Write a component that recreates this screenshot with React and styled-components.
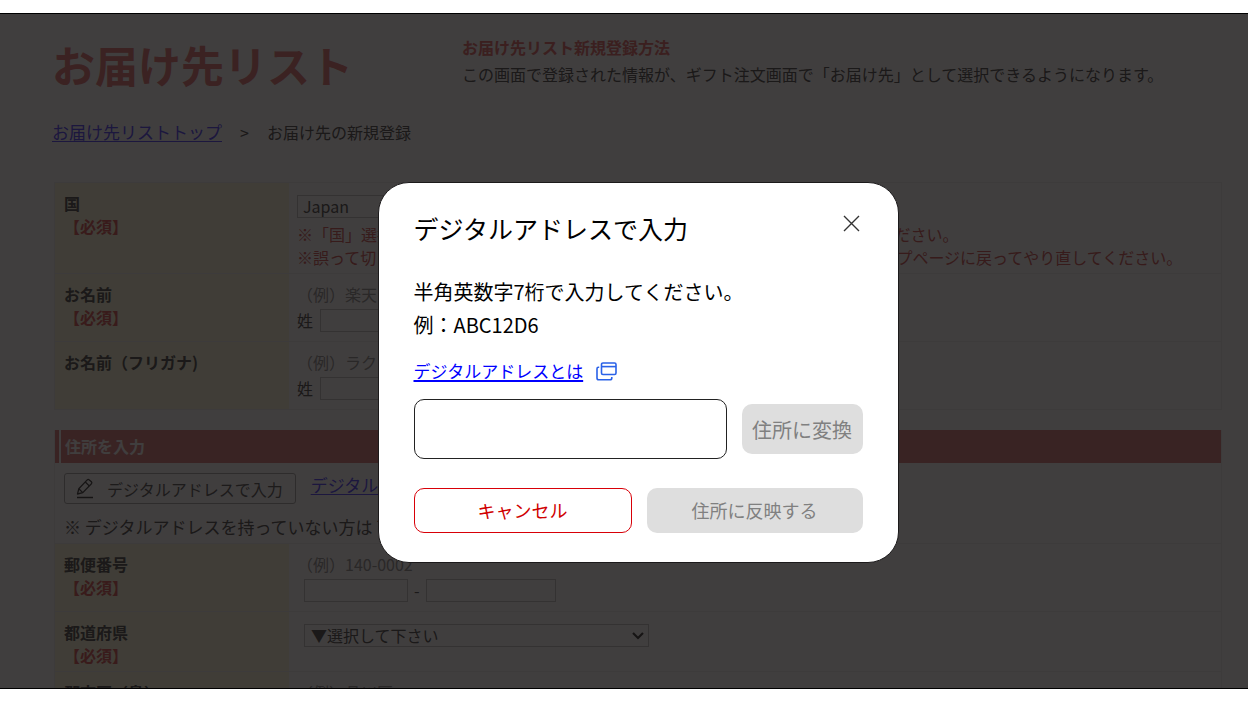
import React from "react";
import styled, { createGlobalStyle } from "styled-components";

const GlobalStyle = createGlobalStyle`
  *, *::before, *::after { box-sizing: border-box; }
  body {
    margin: 0;
    background: #fff;
    color: #666;
    font-family: "Noto Sans CJK JP", "Noto Sans", sans-serif;
    font-size: 16px;
    line-height: 23px;
  }
  button, input, select { font: inherit; }
  h1, h2, p { margin: 0; }
`;

const Frame = styled.div`
  height: 100vh;
  padding: 13px 0;
`;

const Screen = styled.div`
  position: relative;
  height: 100%;
  overflow: hidden;
  border-top: 1px solid #000;
  border-bottom: 1px solid #000;
`;

const Page = styled.main`
  padding: 20px 26px 0 52px;
`;

const Header = styled.header`
  display: flex;
`;

const PageTitle = styled.h1`
  flex: 0 0 410px;
  font-size: 43px;
  line-height: 60px;
  color: #e88c8c;
`;

const Guide = styled.div`
  line-height: 27px;
`;

const GuideTitle = styled.h2`
  font-size: 16px;
  line-height: 27px;
  color: #e88080;
`;

const Breadcrumb = styled.nav`
  display: flex;
  align-items: center;
  gap: 18px;
  margin-top: 26px;
  line-height: 24px;
`;

const TextLink = styled.a`
  font-size: 17px;
  color: ${(p) => (p.$muted ? "#6a60ff" : "#0000ff")};
  text-decoration: underline;
  text-decoration-thickness: ${(p) => (p.$muted ? 1 : 2)}px;
  text-underline-offset: 2px;
`;

const Panel = styled.section`
  margin: ${(p) => p.$top}px 0 0 2px;
  border: 1px solid #f0f0f0;
  border-top: ${(p) => (p.$headed ? "0" : "1px solid #f0f0f0")};
`;

const Row = styled.div`
  display: grid;
  grid-template-columns: 234px 1fr;
  border-top: ${(p) => (p.$first ? "0" : "1px solid #f0f0f0")};
`;

const LabelCell = styled.label`
  display: block;
  padding: 9px 9px ${(p) => (p.$tight ? 4 : 12)}px;
  background: #fcfbe0;
  font-weight: 700;
`;

const Required = styled.span`
  display: block;
  color: #e07070;
`;

const Field = styled.div`
  padding: ${(p) => (p.$plain ? "12px 9px 4px 8px" : "9px 9px 9px 8px")};
`;

const Example = styled.p`
  color: #a4a4a4;
`;

const Note = styled.p`
  color: #d87070;
  white-space: nowrap;
`;

const Controls = styled.div`
  display: flex;
  align-items: center;
  gap: ${(p) => (p.$inset ? 6 : 7)}px;
  margin: ${(p) => (p.$flush ? "0" : "3px")} 0 0 ${(p) => (p.$inset ? 7 : 0)}px;
`;

const TextBox = styled.input`
  width: ${(p) => p.$width}px;
  height: 23px;
  padding: 0 5px;
  border: 1px solid #ccc;
  background: #fff;
  color: #666;
`;

const CountryBox = styled(TextBox)`
  display: block;
  margin-bottom: 5px;
`;

const SelectWrap = styled.div`
  position: relative;
  width: 345px;
  height: 23px;
`;

const SelectBox = styled.select`
  display: block;
  appearance: none;
  width: 100%;
  height: 23px;
  padding: 0 6px;
  border: 1px solid #ccc;
  border-radius: 0;
  background: #fff;
  color: #666;
  line-height: 21px;
`;

const Chevron = styled.svg`
  position: absolute;
  right: 4px;
  top: 6px;
  pointer-events: none;
`;

const SectionBar = styled.h2`
  display: flex;
  height: 33px;
  border-left: 4px solid #e09090;
  font-size: 16px;
  font-weight: 700;
  line-height: 33px;
  color: #fff;
  &::after {
    content: "";
    order: -1;
    flex: 0 0 2px;
    background: #fff;
  }
`;

const BarText = styled.span`
  flex: 1;
  padding-left: 4px;
  background: #e09090;
`;

const AddressIntro = styled.div`
  padding: 10px 9px 4px;
`;

const IntroLine = styled.div`
  display: flex;
  gap: 15px;
  margin-bottom: 11px;
`;

const IntroText = styled.p`
  font-size: 17px;
  line-height: 24px;
`;

const EditButton = styled.button`
  display: flex;
  align-items: center;
  gap: 13px;
  height: 31px;
  padding: 0 12px 0 11px;
  border: 1px solid #b4b4b4;
  border-radius: 3px;
  background: #fff;
  color: #707070;
  font-size: 16px;
  line-height: 24px;
`;

const Overlay = styled.div`
  position: absolute;
  inset: 0;
  display: flex;
  justify-content: center;
  align-items: flex-start;
  padding: 168px 0 0 28px;
  background: rgba(2, 0, 0, 0.757);
`;

const Dialog = styled.div`
  width: 521px;
  padding: 24px 35px 29px;
  border: 1px solid #1c1a1b;
  border-radius: 31px;
  background: #fff;
  color: #000;
`;

const DialogHead = styled.div`
  display: flex;
  justify-content: space-between;
  align-items: flex-start;
  margin-bottom: 26px;
`;

const DialogTitle = styled.h2`
  font-size: 25px;
  font-weight: 400;
  line-height: 42px;
`;

const CloseButton = styled.button`
  display: flex;
  margin-top: 5px;
  padding: 3px;
  border: 0;
  background: none;
`;

const DialogText = styled.p`
  font-size: 20px;
  line-height: 33px;
`;

const HelpLine = styled.div`
  display: flex;
  align-items: center;
  gap: 13px;
  margin-top: 17px;
  line-height: 26px;
`;

const ConvertLine = styled.div`
  display: flex;
  align-items: center;
  gap: 15px;
  margin-top: 15px;
`;

const AddressInput = styled.input`
  flex: 1;
  min-width: 0;
  height: 60px;
  padding: 0 14px;
  border: 1px solid #222;
  border-radius: 10px;
  background: #fff;
  font-size: 20px;
`;

const GrayButton = styled.button`
  width: ${(p) => p.$width};
  flex: ${(p) => (p.$width ? "none" : "1")};
  height: ${(p) => p.$height}px;
  padding: 0;
  border: 0;
  border-radius: 10px;
  background: #dedede;
  color: #808080;
  font-size: ${(p) => p.$size}px;
`;

const CancelButton = styled.button`
  flex: 1;
  height: 45px;
  padding: 0;
  border: 1px solid #d80008;
  border-radius: 10px;
  background: #fff;
  color: #d00000;
  font-size: 18px;
`;

const Actions = styled.div`
  display: flex;
  gap: 15px;
  margin-top: 29px;
`;

function PencilIcon() {
  return (
    <svg width="18" height="21" viewBox="0 0 18 21" fill="none" stroke="#555" strokeWidth="1.3" strokeLinejoin="round" aria-hidden="true">
      <path d="M1.5 16L2.8 10.8L11.2 1.9Q12.2 1 13.3 1.9L15.4 3.8Q16.3 4.8 15.4 5.8L6.8 14.6Z" />
      <path d="M9.3 4L13.2 7.9M2.8 10.8L6.8 14.6M1 19.5H17" />
    </svg>
  );
}

function WindowIcon() {
  return (
    <svg width="21" height="19" viewBox="0 0 21 19" fill="none" stroke="#2a62e8" strokeWidth="1.6" aria-hidden="true">
      <rect x="5.5" y="1" width="14.5" height="11.5" rx="1.4" fill="#fff" />
      <path d="M5.5 4.6H20" />
      <path d="M3.2 5.2H2.4Q1 5.2 1 6.8V16Q1 17.8 2.8 17.8H14Q15.8 17.8 15.8 16V15" />
    </svg>
  );
}

function LabelWithRequired({ id, text, required, tight }) {
  return (
    <LabelCell htmlFor={id} $tight={tight}>
      {text}
      {required && <Required>【必須】</Required>}
    </LabelCell>
  );
}

function NameControls({ id, kind }) {
  return (
    <Controls>
      <label htmlFor={id}>姓</label>
      <TextBox id={id} $width={160} />
      <label htmlFor={id + "-given"}>名</label>
      <TextBox id={id + "-given"} $width={160} aria-label={"名" + kind} />
    </Controls>
  );
}

export default function App() {
  return (
    <Frame>
      <GlobalStyle />
      <Screen>
        <Page>
          <Header>
            <PageTitle>お届け先リスト</PageTitle>
            <Guide>
              <GuideTitle>お届け先リスト新規登録方法</GuideTitle>
              <p>この画面で登録された情報が、ギフト注文画面で「お届け先」として選択できるようになります。</p>
            </Guide>
          </Header>
          <Breadcrumb>
            <TextLink href="#top" $muted>お届け先リストトップ</TextLink>
            <span>&gt;</span>
            <span>お届け先の新規登録</span>
          </Breadcrumb>

          <Panel $top={38}>
            <Row $first>
              <LabelWithRequired id="country" text="国" required />
              <Field $plain>
                <CountryBox id="country" $width={180} defaultValue="Japan" />
                <Note>※「国」選択を 日本以外に切り替えると、 入力フォームが変わりますのでご注意ください。</Note>
                <Note>※誤って切り替えてしまった場合は、 入力内容が消えるので、 お届け先リスト トップページに戻ってやり直してください。</Note>
              </Field>
            </Row>
            <Row>
              <LabelWithRequired id="name" text="お名前" required />
              <Field>
                <Example>（例）楽天　太郎</Example>
                <NameControls id="name" kind="" />
              </Field>
            </Row>
            <Row>
              <LabelWithRequired id="kana" text="お名前（フリガナ)" />
              <Field>
                <Example>（例）ラクテン　タロウ</Example>
                <NameControls id="kana" kind="（フリガナ）" />
              </Field>
            </Row>
          </Panel>

          <Panel $top={20} $headed>
            <SectionBar>
              <BarText>住所を入力</BarText>
            </SectionBar>
            <AddressIntro>
              <IntroLine>
                <EditButton type="button">
                  <PencilIcon />
                  デジタルアドレスで入力
                </EditButton>
                <TextLink href="#about" $muted>デジタルアドレスとは</TextLink>
              </IntroLine>
              <IntroText>※ デジタルアドレスを持っていない方は 下記に入力</IntroText>
            </AddressIntro>
            <Row>
              <LabelWithRequired id="zip" text="郵便番号" required />
              <Field>
                <Example>（例）140-0002</Example>
                <Controls $inset>
                  <TextBox id="zip" $width={104} />
                  <span>-</span>
                  <TextBox $width={130} aria-label="郵便番号 下4桁" />
                </Controls>
              </Field>
            </Row>
            <Row>
              <LabelWithRequired id="prefecture" text="都道府県" required tight />
              <Field $plain>
                <Controls $inset $flush>
                  <SelectWrap>
                    <SelectBox id="prefecture">
                      <option>▼選択して下さい</option>
                    </SelectBox>
                    <Chevron width="14" height="12" viewBox="0 0 14 12" fill="none" stroke="#555" strokeWidth="2.2" aria-hidden="true">
                      <path d="M2 3L7 8L12 3" />
                    </Chevron>
                  </SelectWrap>
                </Controls>
              </Field>
            </Row>
            <Row>
              <LabelWithRequired id="city" text="郡市区（島）" required />
              <Field>
                <Example>（例）品川区</Example>
                <Controls $inset>
                  <TextBox id="city" $width={345} />
                </Controls>
              </Field>
            </Row>
          </Panel>
        </Page>

        <Overlay>
          <Dialog role="dialog" aria-modal="true" aria-labelledby="dialog-title">
            <DialogHead>
              <DialogTitle id="dialog-title">デジタルアドレスで入力</DialogTitle>
              <CloseButton type="button" aria-label="閉じる">
                <svg width="17" height="17" viewBox="0 0 17 17" fill="none" stroke="#333" strokeWidth="1.4" aria-hidden="true">
                  <path d="M1 1L16 16M16 1L1 16" />
                </svg>
              </CloseButton>
            </DialogHead>
            <DialogText>
              <label htmlFor="digital-address">半角英数字7桁で入力してください。</label>
              <br />
              例：ABC12D6
            </DialogText>
            <HelpLine>
              <TextLink href="#digital-address-help">デジタルアドレスとは</TextLink>
              <WindowIcon />
            </HelpLine>
            <ConvertLine>
              <AddressInput id="digital-address" />
              <GrayButton type="button" $width="121px" $height={50} $size={20}>住所に変換</GrayButton>
            </ConvertLine>
            <Actions>
              <CancelButton type="button">キャンセル</CancelButton>
              <GrayButton type="button" $height={45} $size={18}>住所に反映する</GrayButton>
            </Actions>
          </Dialog>
        </Overlay>
      </Screen>
    </Frame>
  );
}
